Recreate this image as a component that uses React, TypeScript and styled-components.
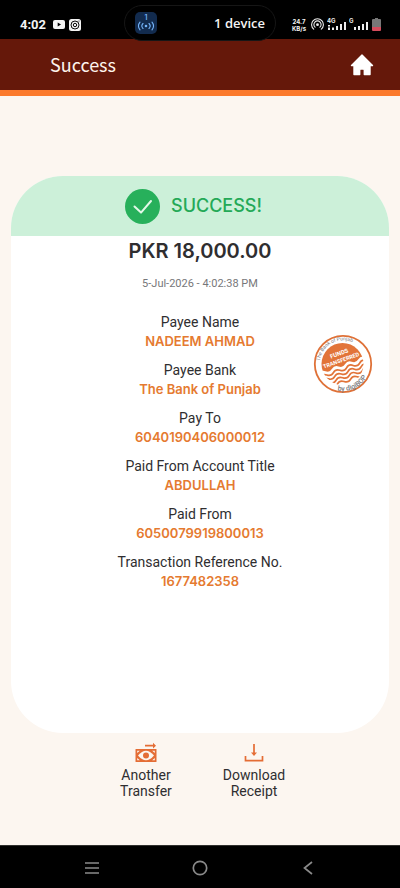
import React from "react";
import styled, { createGlobalStyle } from "styled-components";

const GlobalStyle = createGlobalStyle`
  *, *::before, *::after { box-sizing: border-box; }
  body { margin: 0; background: #fcf6f0; }
  button { font: inherit; color: inherit; background: none; border: 0; padding: 0; cursor: pointer; }
  svg { display: block; flex: none; }
`;

const Screen = styled.div`
  min-height: 100vh;
  display: flex;
  flex-direction: column;
  background: #fcf6f0;
  color: #2f2e30;
  font-family: Inter, "Liberation Sans", sans-serif;
`;

const StatusBar = styled.div`
  height: 39px;
  display: grid;
  grid-template-columns: 1fr 152px 1fr;
  background: #000;
  color: #f4f4f4;
`;

const StatusGroup = styled.div<{ $end?: boolean }>`
  display: flex;
  align-items: center;
  justify-content: ${(p) => (p.$end ? "flex-end" : "flex-start")};
  gap: ${(p) => (p.$end ? "3px" : "4px")};
  padding: ${(p) => (p.$end ? "8px 19px 0 0" : "8px 0 0 20px")};
`;

const Clock = styled.time`
  font: 700 13px/16px Roboto, sans-serif;
  margin-right: 3px;
`;

const Speed = styled.div`
  margin-right: 2px;
  font: 700 6px/7px Inter, sans-serif;
  text-align: center;
`;

const DevicePill = styled.div`
  display: flex;
  align-items: center;
  justify-content: space-between;
  height: 36px;
  margin-top: 5px;
  padding: 0 10px;
  border: 1px solid #161616;
  border-radius: 18px;
  background: #000;
  font: 600 13px/20px "Open Sans", "Noto Sans", sans-serif;
  z-index: 1;
`;

const Header = styled.header`
  height: 57px;
  display: flex;
  align-items: center;
  justify-content: space-between;
  padding: 0 26px 0 50px;
  background: #65180a;
  border-bottom: 6px solid #fb7a2c;
`;

const Title = styled.h1`
  margin: 0;
  padding-bottom: 2px;
  color: #fdf3ec;
  font: 400 18px/28px "Noto Sans CJK SC", "Noto Sans", sans-serif;
`;

const Content = styled.main`
  flex: 1;
  display: flex;
  flex-direction: column;
  padding: 80px 11px 0;
`;

const Card = styled.section`
  position: relative;
  min-height: 557px;
  background: #fff;
  border-radius: 52px;
  overflow: hidden;
  text-align: center;
`;

const Banner = styled.div`
  height: 60px;
  display: flex;
  align-items: center;
  justify-content: center;
  gap: 11px;
  padding-right: 13px;
  background: #ccf0d9;
  color: #24a957;
  font-size: 18px;
  line-height: 24px;
  font-weight: 500;
`;

const Amount = styled.div`
  padding-top: 2px;
  font-size: 20px;
  line-height: 26px;
  font-weight: 600;
`;

const DateLine = styled.time`
  display: block;
  margin-top: 12px;
  color: #77777a;
  font: 400 11px/16px Roboto, sans-serif;
`;

const Details = styled.dl`
  display: flex;
  flex-direction: column;
  gap: 9px;
  margin: 20px 0 0;
`;

const Label = styled.dt`
  font: 400 14px/20px Roboto, sans-serif;
`;

const Value = styled.dd`
  margin: 0;
  color: #e57a30;
  font-size: 13px;
  line-height: 19px;
  font-weight: 600;
`;

const Stamp = styled.svg`
  position: absolute;
  top: 158px;
  right: 16px;
`;

const Actions = styled.div`
  display: flex;
  justify-content: center;
  gap: 32px;
  padding-top: 8px;
`;

const Action = styled.button`
  width: 76px;
  display: flex;
  flex-direction: column;
  align-items: center;
  gap: 2px;
  font: 400 14px/16px Roboto, sans-serif;
`;

const NavBar = styled.nav`
  height: 43px;
  display: flex;
  align-items: center;
  justify-content: space-between;
  padding: 2px 80px 0;
  background: #000;
  border-top: 1px solid #30302e;
`;

const NavButton = styled.button`
  width: 24px;
  height: 24px;
`;

const fields = [
  { label: "Payee Name", value: "NADEEM AHMAD" },
  { label: "Payee Bank", value: "The Bank of Punjab" },
  { label: "Pay To", value: "6040190406000012" },
  { label: "Paid From Account Title", value: "ABDULLAH" },
  { label: "Paid From", value: "6050079919800013" },
  { label: "Transaction Reference No.", value: "1677482358" },
];

function VideoIcon() {
  return (
    <svg width="12" height="9" viewBox="0 0 12 9" aria-hidden="true">
      <rect width="12" height="9" rx="2" fill="#f4f4f4" />
      <path d="M4.7 2.5 8 4.5 4.7 6.5Z" fill="#000" />
    </svg>
  );
}

function CameraIcon() {
  return (
    <svg width="12" height="12" viewBox="0 0 12 12" aria-hidden="true">
      <rect width="12" height="12" rx="2.5" fill="#f4f4f4" />
      <circle cx="6" cy="6" r="4" fill="none" stroke="#111" strokeWidth="1" />
      <circle cx="6" cy="6" r="1.7" fill="none" stroke="#111" strokeWidth="1" />
      <circle cx="10" cy="2" r=".6" fill="#111" />
    </svg>
  );
}

function BroadcastBadge() {
  return (
    <svg width="22" height="22" viewBox="0 0 22 22" aria-hidden="true">
      <rect width="22" height="22" rx="5" fill="#122b4e" />
      <text x="11" y="8" textAnchor="middle" fontFamily="Inter, sans-serif" fontSize="7" fill="#74b3f8">1</text>
      <circle cx="11" cy="14" r="1.3" fill="#74b3f8" />
      <g fill="none" stroke="#74b3f8" strokeWidth="1.1" strokeLinecap="round">
        <path d="M8 11.500a3.600 3.600 0 0 0 0 5M5 10.200a6 6 0 0 0 0 7.600" />
        <path d="M14 11.500a3.600 3.600 0 0 1 0 5M17 10.200a6 6 0 0 1 0 7.600" />
      </g>
    </svg>
  );
}

function HotspotIcon() {
  return (
    <svg width="13" height="13" viewBox="0 0 13 13" aria-hidden="true">
      <g fill="none" stroke="#ededed" strokeWidth="1.1" strokeLinecap="round">
        <path d="M2.7 11.2a5.9 5.9 0 1 1 7.6 0" />
        <path d="M4.1 9.2a3.6 3.6 0 1 1 4.8 0" />
      </g>
      <circle cx="6.5" cy="6.7" r="1.4" fill="#ededed" />
    </svg>
  );
}

function SignalIcon({ label, dotted }: { label: string; dotted?: boolean }) {
  return (
    <svg width={dotted ? 19 : 20} height="13" viewBox={dotted ? "0 0 19 13" : "0 0 20 13"} aria-hidden="true">
      <text x="0" y="5" fontFamily="Inter, sans-serif" fontWeight="700" fontSize="6" fill="#ededed">{label}</text>
      {dotted ? (
        <path d="M1 12h2V9.500h-2zM1 8.500h2V7h-2zM5 12h2V9.500h-2zM9 12h2V8h-2zM13 12h2V6h-2zM17 12h2V4h-2z" fill="#ededed" />
      ) : (
        <path d="M5 12h2v-3h-2zM9 12h2V8h-2zM13 12h2V6h-2zM17 12h2V4h-2z" fill="#ededed" />
      )}
    </svg>
  );
}

function BatteryIcon() {
  return (
    <svg width="9" height="13" viewBox="0 0 9 13" aria-hidden="true">
      <path d="M3 0h3v1h2a1 1 0 0 1 1 1v7H0V2a1 1 0 0 1 1-1h2z" fill="#777" />
      <path d="M0 9h9v3a1 1 0 0 1-1 1H1a1 1 0 0 1-1-1z" fill="#d54c5d" />
    </svg>
  );
}

function HomeIcon() {
  return (
    <svg width="24" height="22" viewBox="0 0 24 22" aria-hidden="true">
      <path
        d="M12 1 22.500 11.500H20V20.500H14.300V16a1 1 0 0 0-1-1h-2.600a1 1 0 0 0-1 1V20.500H4V11.500H1.500Z"
        fill="#fff"
        stroke="#fff"
        strokeWidth="1.4"
        strokeLinejoin="round"
      />
    </svg>
  );
}

function CheckIcon() {
  return (
    <svg width="35" height="35" viewBox="0 0 35 35" aria-hidden="true">
      <circle cx="17.500" cy="17.500" r="17.500" fill="#27b05b" />
      <path d="M9.500 17.500 16 23.600 26 12" fill="none" stroke="#e2f8e8" strokeWidth="2" strokeLinejoin="round" strokeLinecap="round" />
    </svg>
  );
}

function TransferredStamp() {
  return (
    <Stamp width="60" height="60" viewBox="0 0 60 60" role="img" aria-label="Funds transferred">
      <defs>
        <path id="stamp-top" d="M6.700 27A23.500 23.500 0 0 1 50 17.500" />
        <path id="stamp-bottom" d="M24.500 56.400A27 27 0 0 0 57 30" />
        <clipPath id="stamp-disc"><circle cx="29.500" cy="30" r="21" /></clipPath>
      </defs>
      <circle cx="30" cy="30" r="28.200" fill="#fff" stroke="#df7137" strokeWidth="1.800" />
      <g clipPath="url(#stamp-disc)">
        <g transform="rotate(-20 29.500 30)">
          <path d="M4 0H60V31q-3.500 3-7 0t-7 0t-7 0t-7 0t-7 0t-7 0t-7 0t-7 0z" fill="#e27439" />
          <g fill="none" stroke="#e27439" strokeWidth="1.700">
            {[35, 39, 43, 47].map((y) => (
              <path key={y} d={`M4 ${y}q3.500-3 7 0t7 0t7 0t7 0t7 0t7 0t7 0`} />
            ))}
          </g>
          <g fill="#fff" fontFamily="Roboto, sans-serif" fontWeight="700" fontSize="6" textAnchor="middle">
            <text x="30" y="21">FUNDS</text>
            <text x="29.500" y="28" fontSize="5.500">TRANSFERRED</text>
          </g>
        </g>
      </g>
      <g fontFamily="Roboto, sans-serif" fill="#77777c">
        <text fontSize="5"><textPath href="#stamp-top">The Bank of Punjab</textPath></text>
        <text fontSize="7" fontWeight="500"><textPath href="#stamp-bottom">by digiBOP</textPath></text>
      </g>
    </Stamp>
  );
}

function TransferIcon() {
  return (
    <svg width="24" height="24" viewBox="0 0 24 24" aria-hidden="true">
      <path d="M11 3.800h8V1.800L22 4.700 19 7.500V5.600H11z" fill="#e46d35" />
      <rect x="1.500" y="8" width="21" height="13" rx=".5" fill="#e46d35" />
      <path d="M3.200 9.700h2.600L3.200 12zM20.800 9.700h-2.600L20.800 12zM3.200 19.300h2.600L3.200 17zM20.800 19.300h-2.600L20.800 17z" fill="#fcf6f0" />
      <path d="M4 14.500Q12 5 20 14.500Q12 24 4 14.500Z" fill="#fcf6f0" />
      <circle cx="12" cy="14.500" r="3" fill="#e46d35" />
    </svg>
  );
}

function DownloadIcon() {
  return (
    <svg width="24" height="24" viewBox="0 0 24 24" aria-hidden="true">
      <path d="M3.500 15v4.700h17V15M12 3v10" fill="none" stroke="#e46d35" strokeWidth="1.700" />
      <path d="M9 11.500h6L12 15z" fill="#e46d35" />
    </svg>
  );
}

export default function App() {
  return (
    <Screen>
      <GlobalStyle />
      <StatusBar>
        <StatusGroup>
          <Clock>4:02</Clock>
          <VideoIcon />
          <CameraIcon />
        </StatusGroup>
        <DevicePill>
          <BroadcastBadge />
          <span>1 device</span>
        </DevicePill>
        <StatusGroup $end>
          <Speed>24.7<br />KB/s</Speed>
          <HotspotIcon />
          <SignalIcon label="4G" dotted />
          <SignalIcon label="G" />
          <BatteryIcon />
        </StatusGroup>
      </StatusBar>
      <Header>
        <Title>Success</Title>
        <button aria-label="Home"><HomeIcon /></button>
      </Header>
      <Content>
        <Card>
          <Banner><CheckIcon />SUCCESS!</Banner>
          <Amount>PKR 18,000.00</Amount>
          <DateLine dateTime="2026-07-05T16:02:38">5-Jul-2026 - 4:02:38 PM</DateLine>
          <Details>
            {fields.map((f) => (
              <div key={f.label}>
                <Label>{f.label}</Label>
                <Value>{f.value}</Value>
              </div>
            ))}
          </Details>
          <TransferredStamp />
        </Card>
        <Actions>
          <Action><TransferIcon /><span>Another Transfer</span></Action>
          <Action><DownloadIcon /><span>Download Receipt</span></Action>
        </Actions>
      </Content>
      <NavBar>
        <NavButton aria-label="Recent apps">
          <svg width="24" height="24" viewBox="0 0 24 24" stroke="#8a8a8a" strokeWidth="1.700"><path d="M5 7h14M5 12h14M5 17h14" /></svg>
        </NavButton>
        <NavButton aria-label="Home screen">
          <svg width="24" height="24" viewBox="0 0 24 24" fill="none" stroke="#8a8a8a" strokeWidth="1.700"><circle cx="12" cy="12" r="6.700" /></svg>
        </NavButton>
        <NavButton aria-label="Back">
          <svg width="24" height="24" viewBox="0 0 24 24" fill="none" stroke="#8a8a8a" strokeWidth="1.700"><path d="M16 6 8.500 12l7.500 6" /></svg>
        </NavButton>
      </NavBar>
    </Screen>
  );
}
